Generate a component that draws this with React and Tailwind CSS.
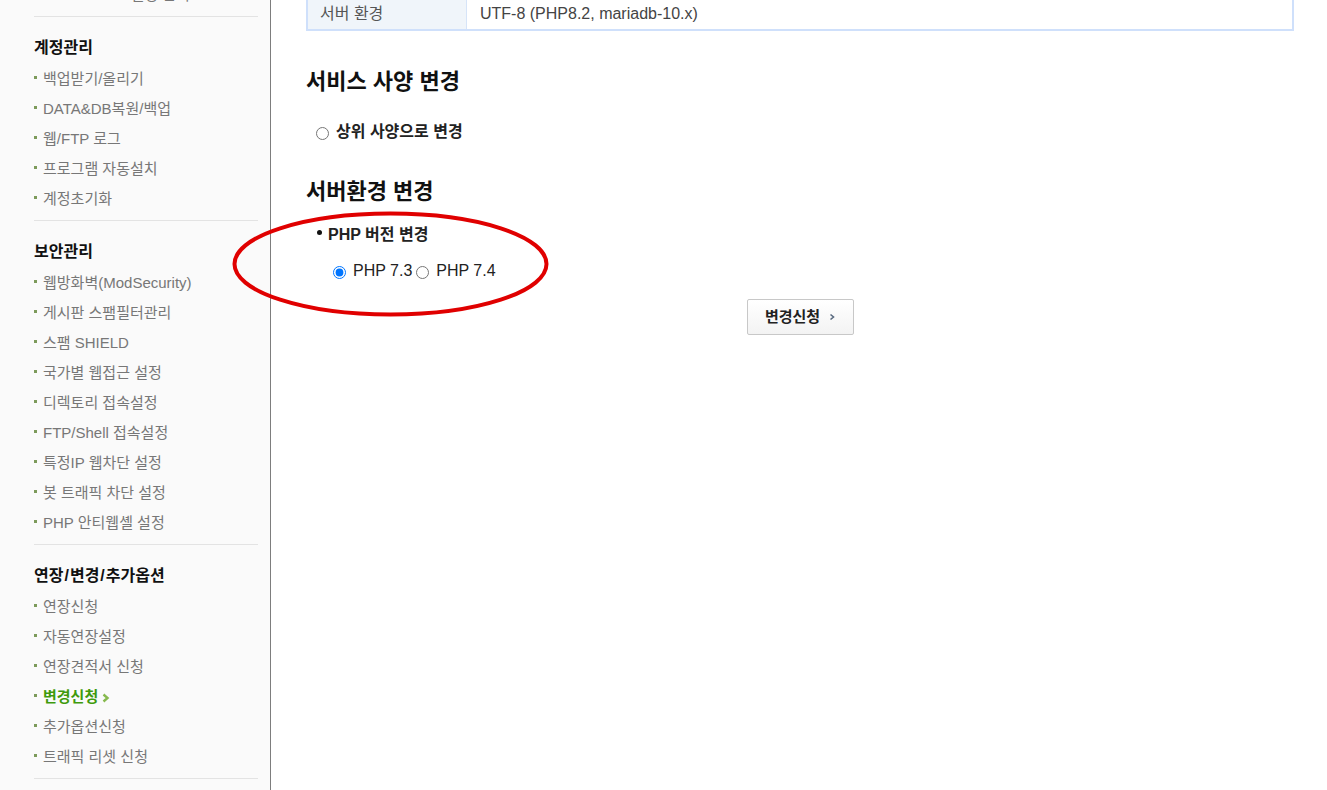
import React from "react";

const FONT = { fontFamily: '"Liberation Sans", "Noto Sans CJK KR", sans-serif' };

function Bullet() {
  return <span className="inline-block w-[3px] h-[3px] bg-[#7c9a5a] mr-[6px] mb-[4px] align-middle" />;
}

function Item({ children, active }) {
  if (active) {
    return (
      <li className="h-[30px] leading-[30px] text-[15px] flex items-center">
        <Bullet />
        <span className="font-bold text-[#3f9a0c]">{children}</span>
        <svg width="8" height="10" viewBox="0 0 8 10" className="ml-[4px] mt-[1px]">
          <polyline points="1.5,1.5 5.5,5 1.5,8.5" fill="none" stroke="#86b94e" strokeWidth="2.4" />
        </svg>
      </li>
    );
  }
  return (
    <li className="h-[30px] leading-[30px] text-[15px] text-[#777] flex items-center">
      <Bullet />
      <span>{children}</span>
    </li>
  );
}

function Section({ title, items, active }) {
  return (
    <div className="pt-[19px] pb-[6px] border-b border-[#e3e3e3]">
      <div className="h-[24px] leading-[24px] text-[16px] font-bold text-[#111]">{title}</div>
      <ul className="mt-[4px]">
        {items.map((it) => (
          <Item key={it} active={it === active}>{it}</Item>
        ))}
      </ul>
    </div>
  );
}

export default function App() {
  return (
    <div className="relative flex h-screen overflow-hidden bg-white" style={FONT}>
      <aside className="w-[271px] shrink-0 bg-[#fafafa] border-r border-[#7d7d7d]">
        <div className="ml-[34px] mr-[12px] -mt-[20px]">
          <div className="pb-[6px] border-b border-[#e3e3e3]">
            <ul>
              <Item>DB/MariaDB 설정/관리</Item>
            </ul>
          </div>
          <Section
            title="계정관리"
            items={["백업받기/올리기", "DATA&DB복원/백업", "웹/FTP 로그", "프로그램 자동설치", "계정초기화"]}
          />
          <Section
            title="보안관리"
            items={[
              "웹방화벽(ModSecurity)",
              "게시판 스팸필터관리",
              "스팸 SHIELD",
              "국가별 웹접근 설정",
              "디렉토리 접속설정",
              "FTP/Shell 접속설정",
              "특정IP 웹차단 설정",
              "봇 트래픽 차단 설정",
              "PHP 안티웹셸 설정",
            ]}
          />
          <Section
            title={
              <span>
                연장<span className="mx-[1px]">/</span>변경<span className="mx-[1px]">/</span>추가옵션
              </span>
            }
            items={["연장신청", "자동연장설정", "연장견적서 신청", "변경신청", "추가옵션신청", "트래픽 리셋 신청"]}
            active="변경신청"
          />
        </div>
      </aside>

      <main className="flex-1 pl-[35px] pr-[33px]">
        <div className="-mt-[12px] flex h-[43px] border-2 border-t-0 border-[#cfe0fb]">
          <div className="w-[159px] shrink-0 bg-[#f0f5fa] border-r border-[#d6e4f8] pl-[12px] flex items-center text-[16px] text-[#555] pt-[10px]">
            서버 환경
          </div>
          <div className="flex-1 pl-[13px] flex items-center text-[16px] text-[#444] pt-[10px]">
            UTF-8 (PHP8.2, mariadb-10.x)
          </div>
        </div>

        <h2 className="mt-[37px] h-[28px] leading-[28px] text-[22px] font-bold text-[#111]">서비스 사양 변경</h2>

        <label className="mt-[24px] pl-[10px] h-[24px] flex items-center gap-[7px] text-[16px] font-bold text-[#222]">
          <input type="radio" name="upgrade" className="m-0 w-[13px] h-[13px] mt-[3px]" />
          <span>상위 사양으로 변경</span>
        </label>

        <h2 className="mt-[34px] h-[28px] leading-[28px] text-[22px] font-bold text-[#111]">서버환경 변경</h2>

        <div className="mt-[17px] pl-[11px] h-[24px] flex items-center text-[16px] font-bold text-[#222]">
          <span className="w-[5px] h-[5px] rounded-full bg-[#111] mr-[6px] mb-[6px]" />
          <span>PHP 버전 변경</span>
        </div>

        <div className="mt-[12px] pl-[27px] h-[24px] flex items-center text-[16px] text-[#222]">
          <label className="flex items-center">
            <input type="radio" name="php" defaultChecked className="m-0 w-[13px] h-[13px] mt-[3px] mr-[7px]" />
            <span>PHP 7.3</span>
          </label>
          <label className="flex items-center ml-[4px]">
            <input type="radio" name="php" className="m-0 w-[13px] h-[13px] mt-[3px] mr-[7px]" />
            <span>PHP 7.4</span>
          </label>
        </div>

        <div className="mt-[16px] flex justify-center">
          <button className="w-[107px] h-[36px] border border-[#c8c8c8] rounded-[2px] bg-gradient-to-b from-white to-[#f3f3f3] flex items-center justify-center gap-[9px] text-[15px] font-bold text-[#222]">
            <span>변경신청</span>
            <svg width="6" height="8" viewBox="0 0 6 8">
              <polyline points="1.5,1.5 4.5,4 1.5,6.5" fill="none" stroke="#5a6b80" strokeWidth="1.6" />
            </svg>
          </button>
        </div>
      </main>

      <svg
        className="absolute left-[230px] top-[209px] pointer-events-none"
        width="322"
        height="110"
        viewBox="0 0 322 110"
      >
        <ellipse cx="160.5" cy="55" rx="156" ry="50.5" fill="none" stroke="#e00000" strokeWidth="4" />
      </svg>
    </div>
  );
}
